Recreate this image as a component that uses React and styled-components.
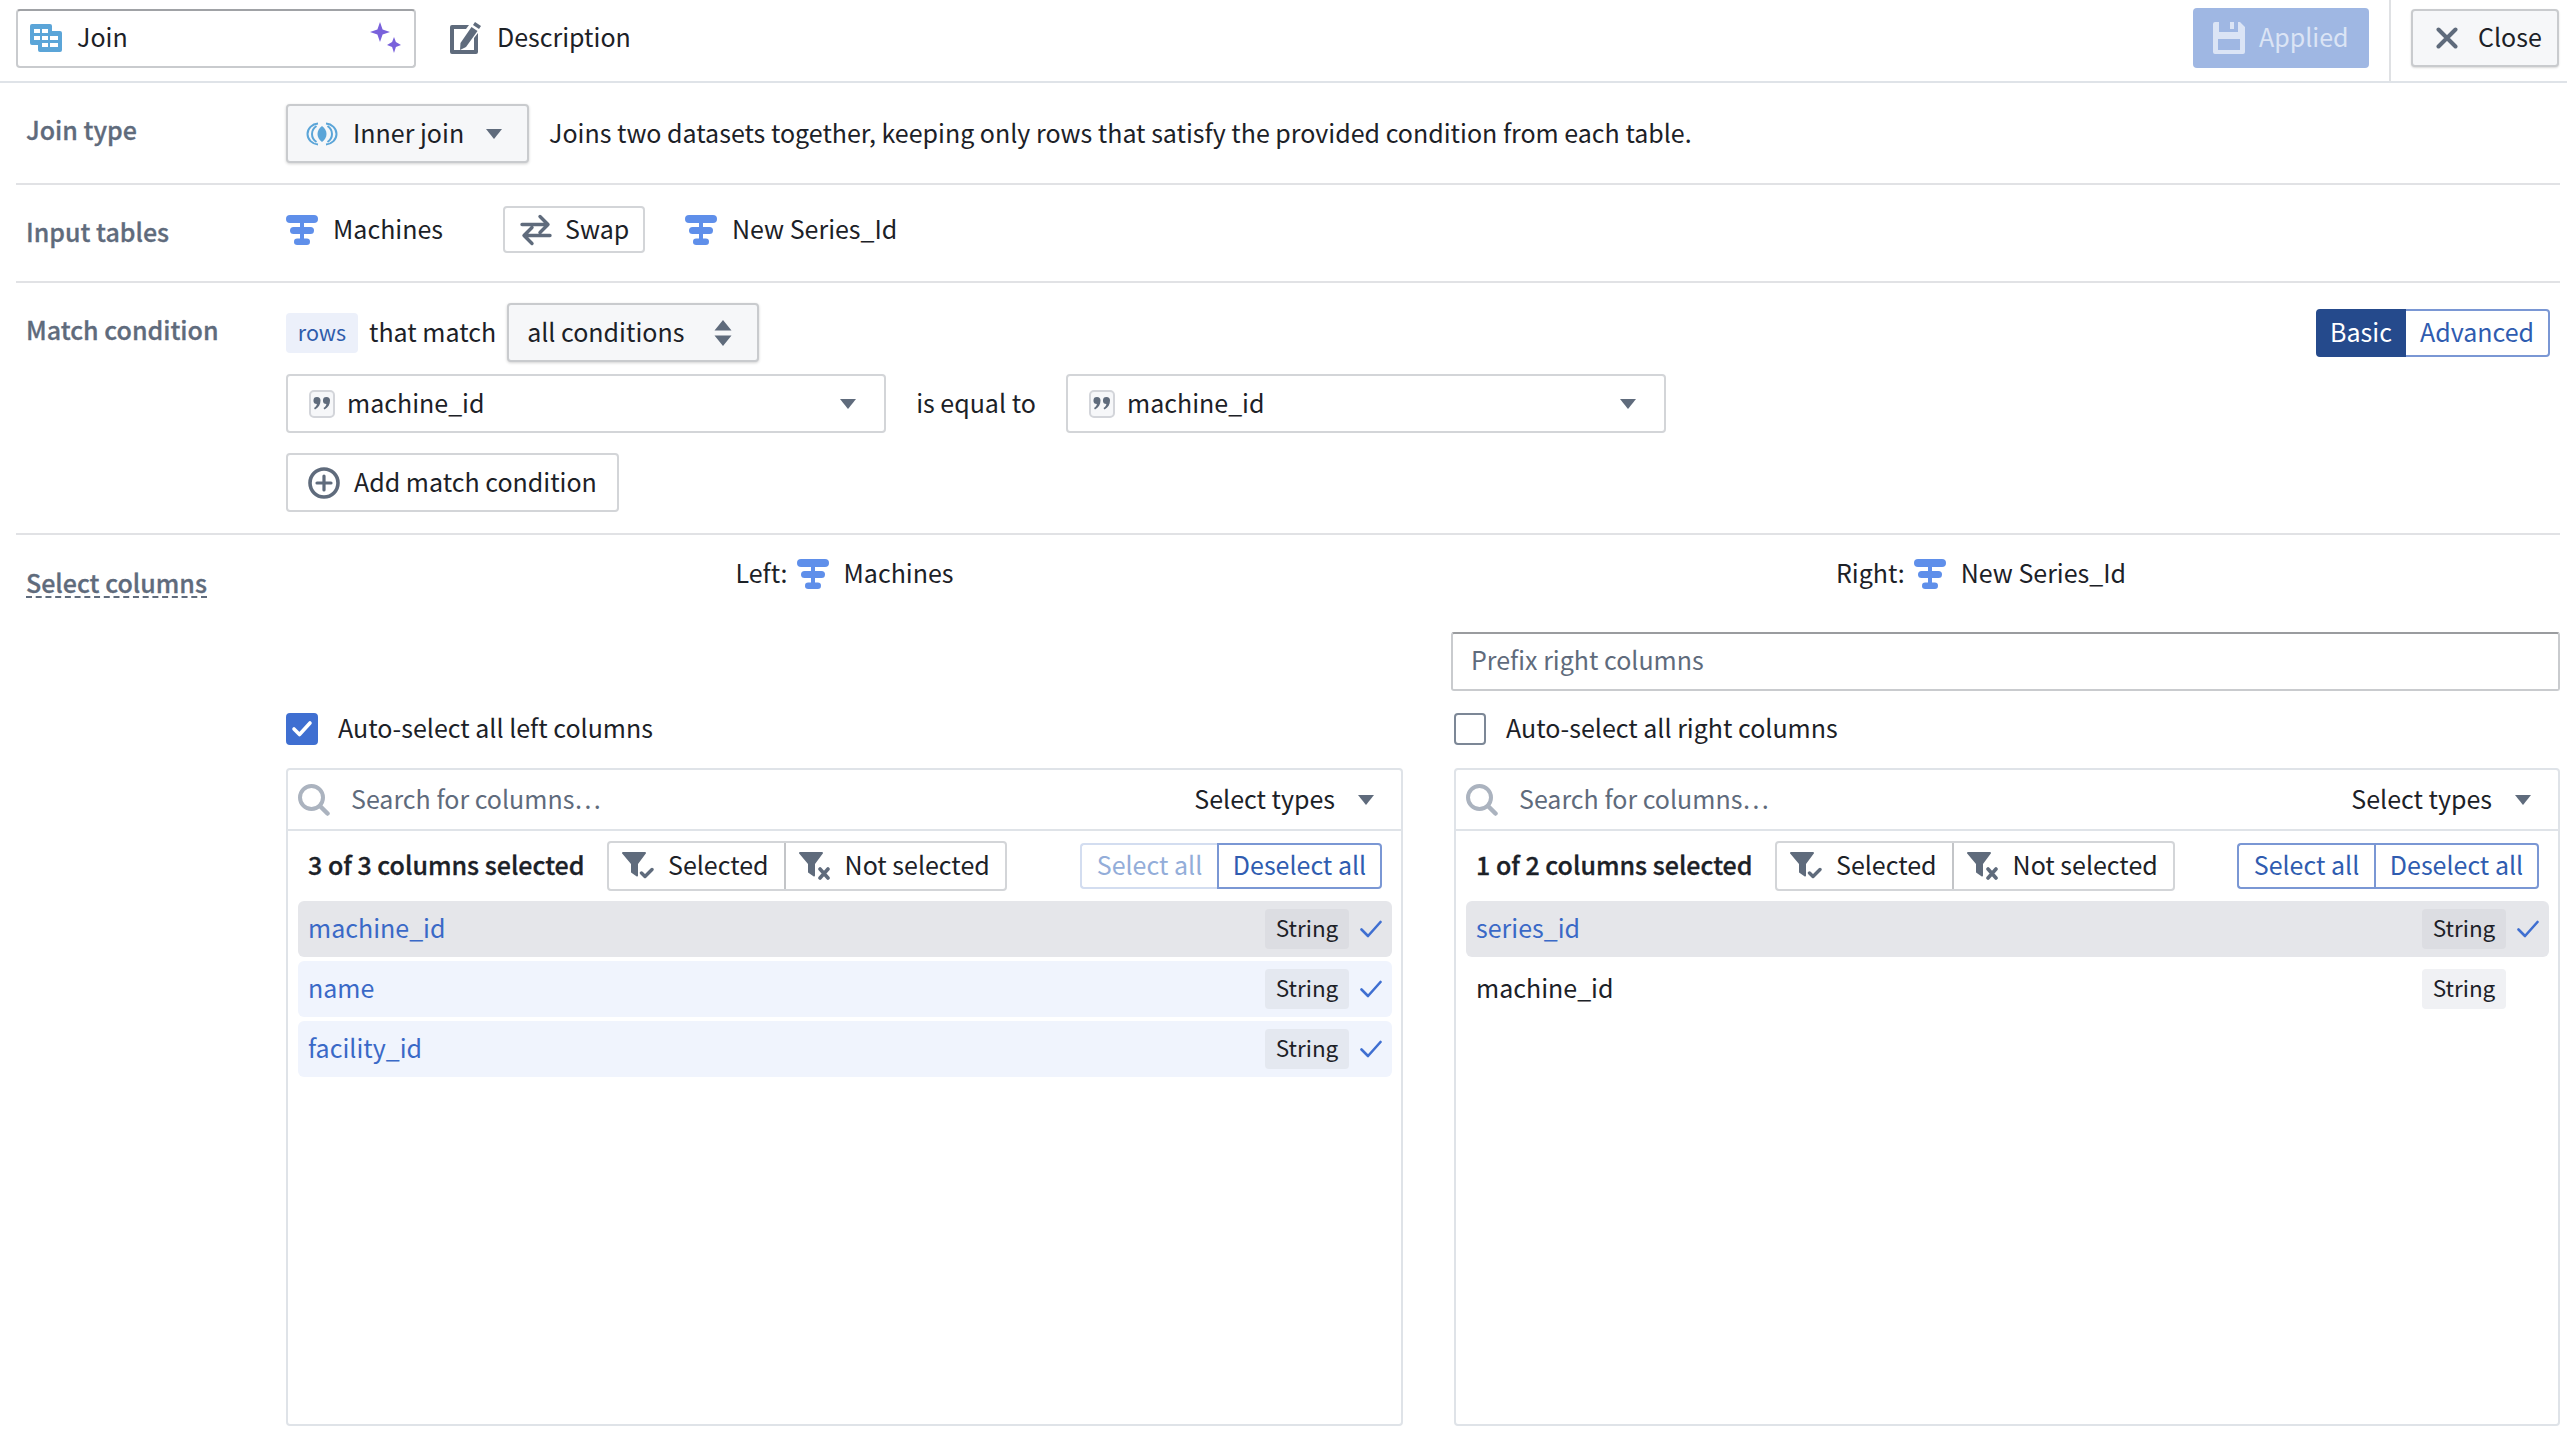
import styled, { createGlobalStyle } from "styled-components";

const GlobalStyle = createGlobalStyle`
  html, body {
    margin: 0;
    padding: 0;
    background: #ffffff;
  }
  body {
    font-family: "Noto Sans CJK JP", "Noto Sans", sans-serif;
    font-size: 25px;
    color: #1c2127;
  }
`;

const TableIcon = () => (
  <svg width="32" height="30" viewBox="0 0 32 30">
    <rect x="0" y="0" width="32" height="8" rx="4" fill="#5f8fea" />
    <rect x="4" y="12" width="24" height="7" rx="3.500" fill="#5f8fea" />
    <rect x="8" y="23.500" width="16" height="6.500" rx="3.200" fill="#5f8fea" />
    <rect x="14" y="4" width="4" height="22" fill="#5f8fea" />
  </svg>
);

const CaretDown = () => (
  <svg width="16" height="10" viewBox="0 0 16 10">
    <path d="M0 0h16L8 10z" fill="#5f6b7c" />
  </svg>
);

const Tick = () => (
  <svg width="22" height="18" viewBox="0 0 22 18">
    <path d="M1.5 9.5l6.5 6.5L20.5 2" fill="none" stroke="#3f6fd1" strokeWidth="2.6" strokeLinecap="round" strokeLinejoin="round" />
  </svg>
);

const JoinIcon = () => (
  <svg width="32" height="28" viewBox="0 0 32 28">
    <path fillRule="evenodd" fill="#5ba5d8" d="M2 0h18a2 2 0 0 1 2 2v5h8a2 2 0 0 1 2 2v17a2 2 0 0 1-2 2H10a2 2 0 0 1-2-2v-5H2a2 2 0 0 1-2-2V2a2 2 0 0 1 2-2zM4 5v4h6V5zM12 5v4h6V5zM4 12v4h6v-4zM12 12v4h6v-4zM20 12v4h8v-4zM12 19v4h6v-4zM20 19v4h8v-4z" />
  </svg>
);

const Sparkles = () => (
  <svg width="32" height="32" viewBox="0 0 32 32">
    <path fill="#7961db" d="M10 0l2.6 7.4L20 10l-7.400 2.600L10 20l-2.600-7.400L0 10l7.400-2.600z" />
    <path fill="#7961db" d="M24 15l1.900 5.100L31 23l-5.100 1.900L24 31l-1.900-6.100L17 23l5.100-2.900z" />
  </svg>
);

const EditIcon = () => (
  <svg width="32" height="32" viewBox="0 0 32 32">
    <path fill="#5f6b7c" d="M2 3h17l-3 4H4v21h20V16l4-5v19a2 2 0 0 1-2 2H2a2 2 0 0 1-2-2V5a2 2 0 0 1 2-2z" />
    <path fill="#5f6b7c" d="M25 0l6 4-2 3-6-4zM21.500 5l6 4L16 25l-6 3 .5-7z" />
  </svg>
);

const InnerJoinIcon = () => (
  <svg width="32" height="24" viewBox="0 0 32 24">
    <path d="M12 1.500C6 2 1.500 6.500 1.500 12S6 22 12 22.500" fill="none" stroke="#5ba5d8" strokeWidth="2" />
    <path d="M20 1.500C26 2 30.500 6.500 30.500 12S26 22 20 22.500" fill="none" stroke="#5ba5d8" strokeWidth="2" />
    <path d="M10.500 4C7.500 6 6 9 6 12s1.500 6 4.500 8" fill="none" stroke="#5ba5d8" strokeWidth="2" />
    <path d="M21.500 4c3 2 4.500 5 4.500 8s-1.500 6-4.500 8" fill="none" stroke="#5ba5d8" strokeWidth="2" />
    <path d="M16 4c3 2.200 4.500 5 4.500 8s-1.500 5.800-4.500 8c-3-2.200-4.500-5-4.500-8s1.500-5.800 4.500-8z" fill="#5ba5d8" />
  </svg>
);

const SwapIcon = () => (
  <svg width="32" height="32" viewBox="0 0 32 32">
    <path d="M2 10.500h26M20 2.500l8 8-8 8M30 21.500H4M12 13.500l-8 8 8 8" fill="none" stroke="#5f6b7c" strokeWidth="3.400" strokeLinecap="round" strokeLinejoin="round" />
  </svg>
);

const SaveIcon = () => (
  <svg width="32" height="32" viewBox="0 0 32 32">
    <path fillRule="evenodd" fill="#dbe4f5" d="M2 0h4v10h19V0h2l5 5v25a2 2 0 0 1-2 2H2a2 2 0 0 1-2-2V2a2 2 0 0 1 2-2zM5 17v11h22V17zM17 0h4v7h-4z" />
  </svg>
);

const CloseIcon = () => (
  <svg width="22" height="22" viewBox="0 0 22 22">
    <path d="M2.500 2.500l17 17M19.500 2.500l-17 17" fill="none" stroke="#5f6b7c" strokeWidth="4" strokeLinecap="round" />
  </svg>
);

const QuoteIcon = () => (
  <svg width="26" height="28" viewBox="0 0 26 28">
    <rect x="1" y="1" width="24" height="26" rx="4" fill="#f6f7f9" stroke="#d3d5da" strokeWidth="2" />
    <path fill="#5f6b7c" d="M8 7a3.500 3.500 0 0 1 3.500 3.500c0 4-1.800 7-5.500 9l-1-1.500c1.700-1 2.600-2.200 2.900-4A3.500 3.500 0 0 1 8 7zM17.500 7a3.500 3.500 0 0 1 3.500 3.500c0 4-1.800 7-5.500 9l-1-1.500c1.700-1 2.600-2.200 2.900-4a3.500 3.500 0 0 1 .1-7z" />
  </svg>
);

const PlusCircle = () => (
  <svg width="32" height="32" viewBox="0 0 32 32">
    <circle cx="16" cy="16" r="14" fill="none" stroke="#5f6b7c" strokeWidth="3.600" />
    <path d="M16 9v14M9 16h14" stroke="#5f6b7c" strokeWidth="3.200" strokeLinecap="round" />
  </svg>
);

const DoubleCaret = () => (
  <svg width="18" height="26" viewBox="0 0 18 26">
    <path fill="#5f6b7c" d="M9 0l8.500 10.500H.5zM9 26L.5 15.500h17z" />
  </svg>
);

const SearchIcon = () => (
  <svg width="32" height="32" viewBox="0 0 32 32">
    <circle cx="13.500" cy="13.500" r="11.500" fill="none" stroke="#abb3bf" strokeWidth="4" />
    <path d="M22 22l7.500 7.500" stroke="#abb3bf" strokeWidth="4.500" strokeLinecap="round" />
  </svg>
);

const FilterIcon = ({ mark }) => (
  <svg width="32" height="28" viewBox="0 0 32 28">
    <path fill="#5f6b7c" d="M1 0h22a1 1 0 0 1 .8 1.600L16 12v11.500a1 1 0 0 1-1.600.8l-5-3.500a1 1 0 0 1-.4-.8V12L.2 1.600A1 1 0 0 1 1 0z" />
    {mark === "check" ? (
      <path d="M19.500 21l3.500 3.500 7-7" fill="none" stroke="#5f6b7c" strokeWidth="3.400" strokeLinecap="round" strokeLinejoin="round" />
    ) : (
      <path d="M21 17l8 9M29 17l-8 9" fill="none" stroke="#5f6b7c" strokeWidth="3.600" strokeLinecap="round" />
    )}
  </svg>
);

function ColumnPanel({ count, selectAllDim, columns }) {
  return (
    <Panel>
      <SearchBar>
        <SearchIcon />
        <SearchText>Search for columns…</SearchText>
        <TypesButton>
          <Txt>Select types</Txt>
          <CaretDown />
        </TypesButton>
      </SearchBar>
      <CountRow>
        <CountText>{count}</CountText>
        <FilterGroup>
          <FilterButton>
            <FilterIcon mark="check" />
            <Txt>Selected</Txt>
          </FilterButton>
          <FilterButton>
            <FilterIcon mark="x" />
            <Txt>Not selected</Txt>
          </FilterButton>
        </FilterGroup>
        <SelectGroup>
          <SelectButton $dim={selectAllDim} $width={137}>Select all</SelectButton>
          <SelectButton $width={165}>Deselect all</SelectButton>
        </SelectGroup>
      </CountRow>
      <RowList>
        {columns.map((col) => (
          <ColumnRow key={col.name} $state={col.state}>
            <ColumnName $picked={!!col.state}>{col.name}</ColumnName>
            <TypeTag $state={col.state}>String</TypeTag>
            <TickSlot>{col.state && <Tick />}</TickSlot>
          </ColumnRow>
        ))}
      </RowList>
    </Panel>
  );
}

export default function App() {
  return (
    <Page>
      <GlobalStyle />
      <Header>
        <NameInput>
          <JoinIcon />
          <NameText>Join</NameText>
          <Sparkles />
        </NameInput>
        <DescriptionLink>
          <EditIcon />
          <Txt>Description</Txt>
        </DescriptionLink>
        <AppliedButton>
          <SaveIcon />
          <Txt>Applied</Txt>
        </AppliedButton>
        <HeaderDivider />
        <CloseButton>
          <CloseIcon />
          <Txt>Close</Txt>
        </CloseButton>
      </Header>

      <Section $top={21} $bottom={20}>
        <Label $top={7}>Join type</Label>
        <Line>
          <GreyButton $width={243}>
            <InnerJoinIcon />
            <GrowTxt>Inner join</GrowTxt>
            <CaretDown />
          </GreyButton>
          <Hint>Joins two datasets together, keeping only rows that satisfy the provided condition from each table.</Hint>
        </Line>
      </Section>

      <Section $top={21} $bottom={28}>
        <Label $top={7}>Input tables</Label>
        <Line>
          <TableName>
            <TableIcon />
            <Txt>Machines</Txt>
          </TableName>
          <SwapButton>
            <SwapIcon />
            <Txt>Swap</Txt>
          </SwapButton>
          <TableName>
            <TableIcon />
            <Txt>New Series_Id</Txt>
          </TableName>
        </Line>
      </Section>

      <Section $top={20} $bottom={21}>
        <Label $top={8}>Match condition</Label>
        <Stack>
          <MatchTop>
            <RowsTag>rows</RowsTag>
            <MatchText>that match</MatchText>
            <GreyButton $width={252}>
              <GrowTxt>all conditions</GrowTxt>
              <DoubleCaret />
            </GreyButton>
            <Toggle>
              <ToggleButton $on>Basic</ToggleButton>
              <ToggleButton>Advanced</ToggleButton>
            </Toggle>
          </MatchTop>
          <ConditionRow>
            <ColumnSelect>
              <QuoteIcon />
              <GrowTxt>machine_id</GrowTxt>
              <CaretDown />
            </ColumnSelect>
            <EqualText>is equal to</EqualText>
            <ColumnSelect>
              <QuoteIcon />
              <GrowTxt>machine_id</GrowTxt>
              <CaretDown />
            </ColumnSelect>
          </ConditionRow>
          <AddButton>
            <PlusCircle />
            <Txt>Add match condition</Txt>
          </AddButton>
        </Stack>
      </Section>

      <SelectSection>
        <SelectLabel>
          <DashedText>Select columns</DashedText>
        </SelectLabel>
        <Columns>
          <Side>
            <SideTitle>
              <Txt>Left:</Txt>
              <TableIcon />
              <Txt>Machines</Txt>
            </SideTitle>
            <PrefixSlot />
            <AutoRow>
              <CheckBox $on>
                <svg width="22" height="18" viewBox="0 0 22 18">
                  <path d="M3 9l5.500 5.500L19 3" fill="none" stroke="#ffffff" strokeWidth="3.600" strokeLinecap="round" strokeLinejoin="round" />
                </svg>
              </CheckBox>
              <Txt>Auto-select all left columns</Txt>
            </AutoRow>
            <ColumnPanel
              count="3 of 3 columns selected"
              selectAllDim
              columns={[
                { name: "machine_id", state: "active" },
                { name: "name", state: "picked" },
                { name: "facility_id", state: "picked" },
              ]}
            />
          </Side>
          <Side>
            <SideTitle $shift={52}>
              <Txt>Right:</Txt>
              <TableIcon />
              <Txt>New Series_Id</Txt>
            </SideTitle>
            <PrefixSlot>
              <PrefixInput>Prefix right columns</PrefixInput>
            </PrefixSlot>
            <AutoRow>
              <CheckBox />
              <Txt>Auto-select all right columns</Txt>
            </AutoRow>
            <ColumnPanel
              count="1 of 2 columns selected"
              columns={[
                { name: "series_id", state: "active" },
                { name: "machine_id" },
              ]}
            />
          </Side>
        </Columns>
      </SelectSection>
    </Page>
  );
}

const Page = styled.div`
  width: 2567px;
  height: 1431px;
  overflow: hidden;
  line-height: 36px;
`;

// the font sits low in its line box, this brings the text back up next to the icons
const Txt = styled.span`
  display: block;
  margin-bottom: 4px;
`;

const GrowTxt = styled(Txt)`
  flex: 1;
`;

const Header = styled.div`
  display: flex;
  align-items: center;
  box-sizing: border-box;
  height: 83px;
  padding: 0 8px 5px 16px;
  border-bottom: 2px solid #dfe3e8;
`;

const NameInput = styled.div`
  box-sizing: border-box;
  display: flex;
  align-items: center;
  width: 400px;
  height: 59px;
  padding: 0 12px 0 12px;
  border: 2px solid #c9cbce;
  border-top-color: #a0a2a6;
  border-radius: 4px;
`;

const NameText = styled(Txt)`
  flex: 1;
  margin-left: 15px;
`;

const DescriptionLink = styled.div`
  display: flex;
  align-items: center;
  gap: 15px;
  flex: 1;
  margin-left: 34px;
`;

const AppliedButton = styled.div`
  box-sizing: border-box;
  display: flex;
  align-items: center;
  gap: 14px;
  width: 176px;
  height: 60px;
  padding-left: 20px;
  background: #9fb7e3;
  border-radius: 4px;
  color: #dbe4f5;
`;

const HeaderDivider = styled.div`
  align-self: stretch;
  width: 2px;
  margin: 0 20px -5px;
  background: #dfe1e4;
`;

const CloseButton = styled.div`
  box-sizing: border-box;
  display: flex;
  align-items: center;
  gap: 20px;
  width: 148px;
  height: 58px;
  padding-left: 23px;
  background: #f6f7f9;
  border: 2px solid #c9cbce;
  border-radius: 4px;
  box-shadow: 0 1px 2px rgba(0, 0, 0, 0.15);
`;

const Section = styled.div`
  display: grid;
  grid-template-columns: 270px 1fr;
  margin: 0 7px 0 16px;
  padding: ${(p) => p.$top}px 0 ${(p) => p.$bottom}px;
  border-bottom: 2px solid #e1e2e5;
`;

const Label = styled.div`
  padding: ${(p) => p.$top}px 0 0 10px;
  color: #5f6b7c;
  font-weight: 500;
  -webkit-text-stroke: 0.3px #5f6b7c;
`;

const Line = styled.div`
  display: flex;
  align-items: center;
`;

const GreyButton = styled.div`
  box-sizing: border-box;
  display: flex;
  align-items: center;
  gap: 15px;
  width: ${(p) => p.$width}px;
  height: 59px;
  padding: 0 25px 0 18px;
  background: #f6f7f9;
  border: 2px solid #c9cbce;
  border-radius: 4px;
  box-shadow: 0 1px 3px rgba(0, 0, 0, 0.18);
`;

const Hint = styled(Txt)`
  margin-left: 20px;
`;

const TableName = styled.div`
  display: flex;
  align-items: center;
  gap: 15px;
`;

const SwapButton = styled.div`
  box-sizing: border-box;
  display: flex;
  align-items: center;
  gap: 13px;
  width: 142px;
  height: 47px;
  margin: 0 40px 0 60px;
  padding-left: 15px;
  border: 2px solid #d3d5d8;
  border-radius: 4px;
`;

const Stack = styled.div`
  display: flex;
  flex-direction: column;
  align-items: flex-start;
  gap: 20px;
`;

const MatchTop = styled.div`
  display: flex;
  align-items: center;
  align-self: stretch;
  margin-bottom: -8px;
  padding-right: 10px;
`;

const RowsTag = styled.span`
  width: 72px;
  height: 40px;
  margin-right: 11px;
  background: #ecf0fa;
  border-radius: 4px;
  color: #2f5cab;
  font-size: 21.500px;
  line-height: 37px;
  text-align: center;
`;

const MatchText = styled(Txt)`
  margin-right: 11px;
`;

const Toggle = styled.div`
  display: flex;
  margin-left: auto;
  height: 48px;
`;

const ToggleButton = styled.div`
  box-sizing: border-box;
  width: ${(p) => (p.$on ? "90px" : "144px")};
  background: ${(p) => (p.$on ? "#254a8c" : "#ffffff")};
  border: 2px solid ${(p) => (p.$on ? "#254a8c" : "#7a97d4")};
  border-left-width: ${(p) => (p.$on ? "2px" : "0")};
  border-radius: ${(p) => (p.$on ? "4px 0 0 4px" : "0 4px 4px 0")};
  color: ${(p) => (p.$on ? "#ffffff" : "#2f5cb0")};
  line-height: 40px;
  text-align: center;
`;

const ConditionRow = styled.div`
  display: flex;
  align-items: center;
`;

const ColumnSelect = styled.div`
  box-sizing: border-box;
  display: flex;
  align-items: center;
  gap: 12px;
  width: 600px;
  height: 59px;
  padding: 0 28px 0 21px;
  border: 2px solid #d3d5d8;
  border-radius: 4px;
`;

const EqualText = styled(Txt)`
  width: 180px;
  text-align: center;
`;

const AddButton = styled.div`
  box-sizing: border-box;
  display: flex;
  align-items: center;
  gap: 14px;
  width: 333px;
  height: 59px;
  padding-left: 20px;
  border: 2px solid #d3d5d8;
  border-radius: 4px;
`;

const SelectSection = styled.div`
  display: grid;
  grid-template-columns: 270px 1fr;
  margin: 0 7px 0 16px;
`;

const SelectLabel = styled.div`
  padding: 29px 0 0 10px;
  color: #5f6b7c;
  font-weight: 500;
  -webkit-text-stroke: 0.3px #5f6b7c;
`;

const DashedText = styled.span`
  display: inline-block;
  line-height: 28px;
  border-bottom: 2px dashed #5f6b7c;
`;

const Columns = styled.div`
  display: grid;
  grid-template-columns: 1117px 1106px;
  column-gap: 51px;
`;

const Side = styled.div`
  display: flex;
  flex-direction: column;
`;

const SideTitle = styled.div`
  display: flex;
  align-items: center;
  justify-content: center;
  gap: 9px;
  height: 36px;
  margin-top: 21px;
  padding-right: ${(p) => p.$shift || 0}px;
  svg {
    margin-right: 6px;
  }
`;

const PrefixSlot = styled.div`
  height: 59px;
  margin-top: 40px;
`;

const PrefixInput = styled.div`
  box-sizing: border-box;
  height: 59px;
  margin-left: -3px;
  padding-left: 18px;
  border: 2px solid #c9cbce;
  border-top-color: #9a9c9f;
  border-radius: 3px;
  color: #5f6b7c;
  line-height: 51px;
`;

const AutoRow = styled.div`
  display: flex;
  align-items: center;
  gap: 20px;
  height: 36px;
  margin-top: 20px;
`;

const CheckBox = styled.div`
  box-sizing: border-box;
  display: flex;
  align-items: center;
  justify-content: center;
  width: 32px;
  height: 32px;
  background: ${(p) => (p.$on ? "#3f6fd1" : "#ffffff")};
  border: 2px solid ${(p) => (p.$on ? "#3f6fd1" : "#7c8796")};
  border-radius: 4px;
`;

const Panel = styled.div`
  box-sizing: border-box;
  height: 658px;
  margin-top: 21px;
  border: 2px solid #dfe3e8;
  border-radius: 4px;
`;

const SearchBar = styled.div`
  box-sizing: border-box;
  display: flex;
  align-items: center;
  height: 61px;
  padding: 0 27px 0 10px;
  border-bottom: 2px solid #dfe3e8;
`;

const SearchText = styled(Txt)`
  flex: 1;
  margin-left: 21px;
  color: #5f6b7c;
`;

const TypesButton = styled.div`
  display: flex;
  align-items: center;
  gap: 23px;
`;

const CountRow = styled.div`
  display: flex;
  align-items: center;
  height: 70px;
  padding: 0 19px 0 20px;
`;

const CountText = styled(Txt)`
  flex: 0 0 299px;
  font-weight: 500;
  -webkit-text-stroke: 0.3px #1c2127;
`;

const FilterGroup = styled.div`
  display: flex;
  height: 46px;
  margin-right: auto;
  border: 2px solid #d3d5d8;
  border-radius: 4px;
`;

const FilterButton = styled.div`
  display: flex;
  align-items: center;
  gap: 14px;
  padding: 0 15px 0 13px;
  & + & {
    border-left: 2px solid #c3c5c8;
  }
`;

const SelectGroup = styled.div`
  display: flex;
  height: 46px;
`;

const SelectButton = styled.div`
  box-sizing: border-box;
  width: ${(p) => p.$width}px;
  border: 2px solid ${(p) => (p.$dim ? "#d3ddf0" : "#7a97d4")};
  color: ${(p) => (p.$dim ? "#93add9" : "#2f5cb0")};
  line-height: 38px;
  text-align: center;
  &:first-child {
    border-radius: 4px 0 0 4px;
    border-right: 0;
  }
  &:last-child {
    border-radius: 0 4px 4px 0;
  }
`;

const RowList = styled.div`
  display: flex;
  flex-direction: column;
  gap: 4px;
  padding: 0 9px 0 10px;
`;

const rowColors = { active: "#e5e6ea", picked: "#f0f4fd" };
const tagColors = { active: "#dcdde2", picked: "#e4e8f0" };

const ColumnRow = styled.div`
  display: flex;
  align-items: center;
  height: 56px;
  padding: 0 10px;
  background: ${(p) => rowColors[p.$state] || "#ffffff"};
  border-radius: 6px;
`;

const ColumnName = styled(Txt)`
  flex: 1;
  color: ${(p) => (p.$picked ? "#3a69c7" : "#1c2127")};
`;

const TypeTag = styled.span`
  width: 84px;
  height: 40px;
  background: ${(p) => tagColors[p.$state] || "#f0f1f4"};
  border-radius: 4px;
  font-size: 22.500px;
  line-height: 36px;
  text-align: center;
`;

const TickSlot = styled.div`
  display: flex;
  justify-content: flex-end;
  width: 33px;
`;
